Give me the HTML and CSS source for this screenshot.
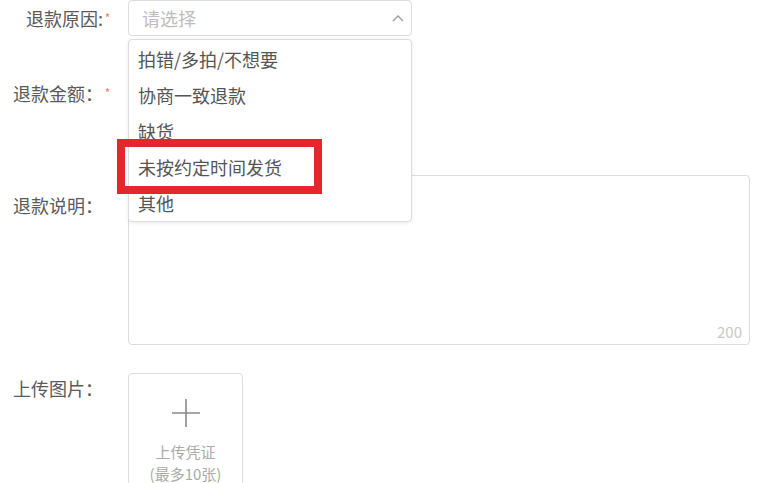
FILE: index.html
```html
<!DOCTYPE html>
<html lang="zh-CN">
<head>
<meta charset="utf-8">
<title>申请退款</title>
<link rel="stylesheet" href="styles.css">
</head>
<body>
<form class="form">
  <div class="row row-reason">
    <div class="label">退款原因:<span class="star">*</span></div>
    <div class="control">
      <div class="select">
        <span class="placeholder">请选择</span>
        <svg class="chevron" width="12" height="8" viewBox="0 0 12 8"><path d="M1 7 L6 2 L11 7" fill="none" stroke="#9a9a9a" stroke-width="1.3"/></svg>
      </div>
      <ul class="dropdown">
        <li>拍错/多拍/不想要</li>
        <li>协商一致退款</li>
        <li>缺货</li>
        <li>未按约定时间发货</li>
        <li>其他</li>
        <div class="highlight"></div>
      </ul>
    </div>
  </div>
  <div class="row row-amount">
    <div class="label">退款金额：<span class="star">*</span></div>
    <div class="control"><div class="input"></div></div>
  </div>
  <div class="row row-desc">
    <div class="label label-plain">退款说明：</div>
    <div class="control">
      <div class="textarea"><span class="count">200</span></div>
    </div>
  </div>
  <div class="row row-upload">
    <div class="label label-plain">上传图片：</div>
    <div class="control">
      <div class="upload">
        <svg class="plus" width="30" height="30" viewBox="0 0 30 30"><path d="M15 1 V29 M1 15 H29" stroke="#8a8a8a" stroke-width="1.6" fill="none"/></svg>
        <div class="upload-text">上传凭证</div>
        <div class="upload-text">(最多10张)</div>
      </div>
    </div>
  </div>
</form>
</body>
</html>
```
FILE: styles.css
```css
* { box-sizing: border-box; }
body {
  margin: 0;
  background: #fff;
  color: #555;
  font-family: "Noto Sans CJK SC", "Noto Sans", sans-serif;
  font-size: 18px;
  overflow: hidden;
}
.form { display: flex; flex-direction: column; }
.row { display: flex; }
.label {
  width: 112px;
  text-align: right;
  line-height: 36px;
  color: #5a5a5a;
  white-space: nowrap;
}
.label-plain { padding-right: 9px; }
.star {
  display: inline-block;
  width: 9px;
  text-align: center;
  color: #f0806e;
  font-size: 12px;
  line-height: 12px;
  vertical-align: 3px;
}
.control { margin-left: 16px; position: relative; }

.select {
  width: 284px;
  height: 36px;
  border: 1px solid #dcdcdc;
  border-radius: 4px;
  display: flex;
  align-items: center;
  justify-content: space-between;
  padding: 0 7px 0 13px;
}
.placeholder { color: #bdbdbd; }
.chevron { display: block; }

.dropdown {
  position: absolute;
  left: 0;
  top: 39px;
  width: 284px;
  margin: 0;
  padding: 1px 0 0;
  list-style: none;
  background: #fff;
  border: 1px solid #dcdcdc;
  border-radius: 4px;
  box-shadow: 0 1px 4px rgba(0,0,0,0.08);
  z-index: 2;
}
.dropdown li {
  line-height: 36px;
  padding-left: 9px;
  color: #555;
}
.highlight {
  position: absolute;
  left: -12px;
  top: 99px;
  width: 205px;
  height: 55px;
  border: 8px solid #e5262d;
}

.row-amount { margin-top: 39px; }
.input {
  width: 270px;
  height: 36px;
  border: 1px solid #dcdcdc;
  border-radius: 4px;
}

.row-desc { margin-top: 64px; }
.row-desc .label { padding-top: 12px; }
.textarea {
  width: 622px;
  height: 170px;
  border: 1px solid #dcdcdc;
  border-radius: 4px;
  position: relative;
}
.count {
  position: absolute;
  right: 7px;
  bottom: 2px;
  font-size: 15px;
  color: #c8c8c8;
}

.row-upload { margin-top: 28px; }
.row-upload .label { line-height: 30px; }
.upload {
  width: 115px;
  height: 120px;
  border: 1px solid #dcdcdc;
  border-radius: 4px;
  display: flex;
  flex-direction: column;
  align-items: center;
  padding-top: 24px;
}
.plus { display: block; margin-bottom: 13px; }
.upload-text {
  font-size: 15px;
  line-height: 22px;
  color: #aaa;
}
```
